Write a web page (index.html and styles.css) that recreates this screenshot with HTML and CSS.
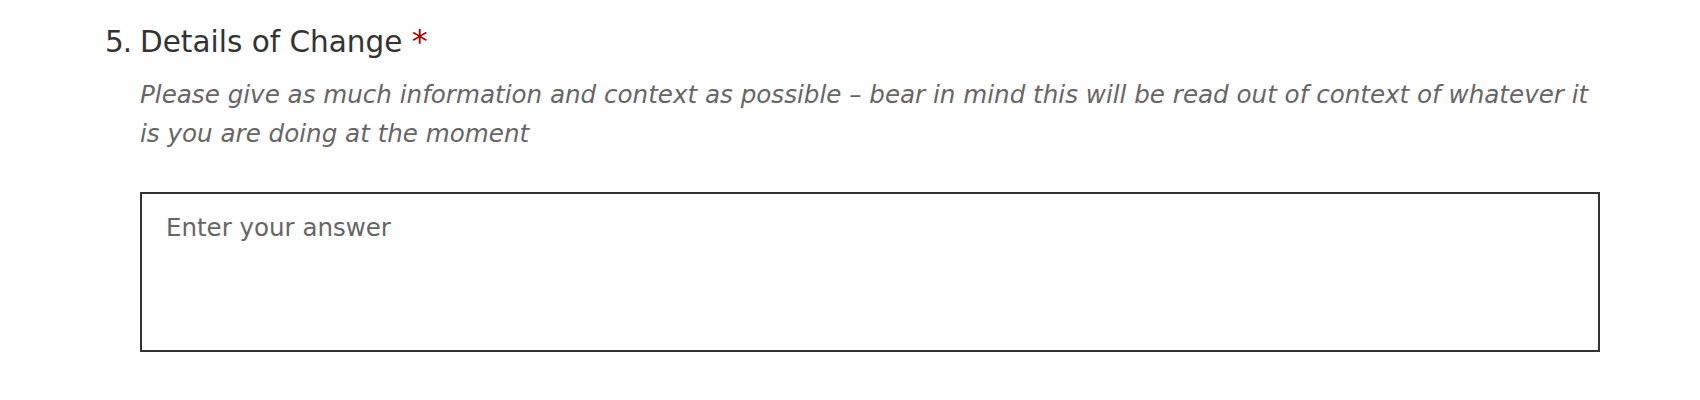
FILE: index.html
```html
<!DOCTYPE html>
<html lang="en">
<head>
<meta charset="utf-8">
<title>Details of Change</title>
<link rel="stylesheet" href="styles.css">
</head>
<body>
<div class="question">
  <div class="q-num">5.</div>
  <div class="q-body">
    <div class="q-title">Details of Change <span class="req">*</span></div>
    <div class="q-desc">Please give as much information and context as possible – bear in mind this will be read out of context of whatever it is you are doing at the moment</div>
    <textarea class="answer" placeholder="Enter your answer"></textarea>
  </div>
</div>
</body>
</html>
```
FILE: styles.css
```css
html, body {
  margin: 0;
  padding: 0;
  background: #fefefe;
}
body {
  font-family: "DejaVu Sans", "Liberation Sans", sans-serif;
}
.question {
  display: flex;
  padding: 24px 0 0 105px;
}
.q-num {
  width: 35px;
  font-size: 29.5px;
  line-height: 36px;
  color: #333;
  letter-spacing: -1px;
}
.q-body {
  width: 1460px;
}
.q-title {
  font-size: 29.5px;
  line-height: 36px;
  color: #333;
}
.req {
  color: #a80000;
  font-size: 32px;
  line-height: 0;
}
.q-desc {
  margin-top: 15px;
  font-size: 24.6px;
  font-style: italic;
  line-height: 39px;
  color: #666;
}
.answer {
  display: block;
  box-sizing: border-box;
  width: 1460px;
  height: 160px;
  margin-top: 39px;
  padding: 18px 24px;
  border: 2px solid #333;
  border-radius: 0;
  background: #fefefe;
  font-family: inherit;
  font-size: 24.5px;
  line-height: 32px;
  color: #333;
  resize: none;
  outline: none;
}
.answer::placeholder {
  color: #666;
  opacity: 1;
}
```
